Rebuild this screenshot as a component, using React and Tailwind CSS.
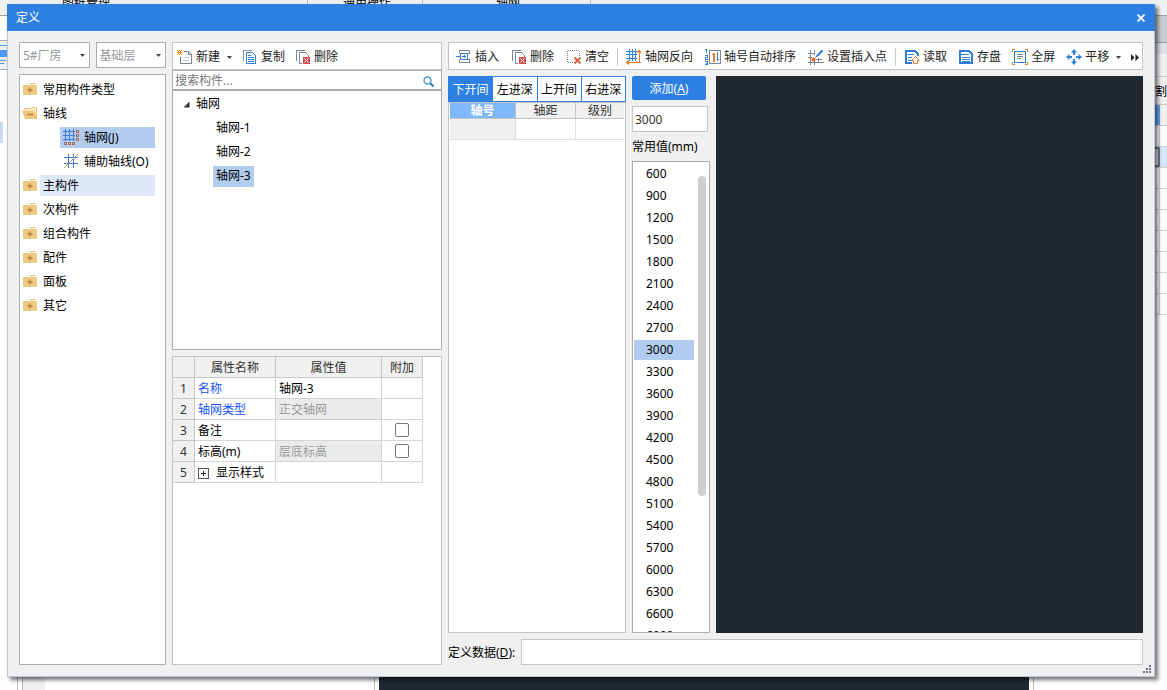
import React, { useState } from "react";

const CATEGORIES = [
  { label: "常用构件类型" },
  {
    label: "轴线",
    open: true,
    children: [
      { label: "轴网(J)", icon: GridNodesIcon, selected: true },
      { label: "辅助轴线(O)", icon: GridAuxIcon },
    ],
  },
  { label: "主构件", hover: true },
  { label: "次构件" },
  { label: "组合构件" },
  { label: "配件" },
  { label: "面板" },
  { label: "其它" },
];

const PROPERTIES = [
  { name: "名称", value: "轴网-3", link: true },
  { name: "轴网类型", value: "正交轴网", link: true, readOnly: true },
  { name: "备注", value: "", extra: true },
  { name: "标高(m)", value: "层底标高", readOnly: true, extra: true },
  { name: "显示样式", value: "", group: true },
];

const SPACINGS = [
  600, 900, 1200, 1500, 1800, 2100, 2400, 2700, 3000, 3300, 3600, 3900, 4200,
  4500, 4800, 5100, 5400, 5700, 6000, 6300, 6600, 6900,
];

function Svg({ children, size = 16 }) {
  return (
    <svg
      width={size}
      height={size}
      viewBox={`0 0 ${size} ${size}`}
      fill="none"
      shapeRendering="crispEdges"
      className="shrink-0"
      aria-hidden="true"
    >
      {children}
    </svg>
  );
}

function FolderIcon({ open }) {
  if (open) {
    return (
      <svg width="16" height="14" viewBox="0 0 16 14" className="shrink-0" aria-hidden="true">
        <path d="M2.500 4V2.500H9L10 1.500h4.500V12" stroke="#ecc06b" fill="#fdf0d0" />
        <path d="M0 4.500h12.500L15 13H3z" fill="#efc67a" />
        <path d="M5 8.500h6" stroke="#b8863a" strokeWidth="1.500" />
      </svg>
    );
  }
  return (
    <svg width="16" height="14" viewBox="0 0 16 14" className="shrink-0" aria-hidden="true">
      <path d="M7.500 2.200 8.500 1H13l1 1.200z" fill="#efc377" />
      <rect x="1" y="3" width="14" height="10" rx="1" fill="#efc97f" />
      <path d="M8 5.500v5M5.500 8h5" stroke="#c08f42" strokeWidth="1.800" />
    </svg>
  );
}

function GridNodesIcon() {
  return (
    <Svg>
      <path d="M0 2.500h12M0 6.500h12M0 10.500h12M2.500 0v12M6.500 0v12M10.500 0v12" stroke="#3a7fd5" />
      <path
        d="M13.500 1.500h2v2h-2zM13.500 5.500h2v2h-2zM13.500 9.500h2v2h-2zM1.500 13.500h2v2h-2zM5.500 13.500h2v2h-2zM9.500 13.500h2v2h-2z"
        stroke="#a8705c"
      />
    </Svg>
  );
}

function GridAuxIcon() {
  return (
    <Svg>
      <path d="M1 4.500h14M1 10.500h14M5.500 1v14M10.500 1v14" stroke="#3a7fd5" />
      <path d="M1 15 15 1" stroke="#c08a66" shapeRendering="auto" />
    </Svg>
  );
}

function NewIcon() {
  return (
    <Svg>
      <path d="M7 2.500h4.500l3 3v9h-11V8" stroke="#7b8691" />
      <path d="M11.500 3v2.500h3" stroke="#7b8691" />
      <path d="M6 8.500h6M6 11.500h6" stroke="#c4c9ce" />
      <path
        d="M0 1h1v1H0zM2 1h1v1H2zM4 1h1v1H4zM1 2h1v1H1zM3 2h1v1H3zM0 3h5v1H0zM1 4h1v1H1zM3 4h1v1H3zM0 5h1v1H0zM2 5h1v1H2zM4 5h1v1H4z"
        fill="#f08a0a"
      />
    </Svg>
  );
}

function CopyIcon() {
  return (
    <Svg>
      <path d="M1.500 12V1.500H10" stroke="#8a949e" />
      <path d="M4.500 3.500h6l3 3v8h-9z" stroke="#2f7fd6" />
      <path d="M6 6.500h3M6 8.500h6M6 10.500h6M6 12.500h6" stroke="#2f7fd6" />
    </Svg>
  );
}

function DeleteIcon() {
  return (
    <Svg>
      <path d="M1.500 12V1.500H10" stroke="#7b8691" />
      <path d="M7 14.500H4.500v-11h6l3 3V8" stroke="#7b8691" />
      <rect x="8" y="8" width="7" height="7" fill="#d9484c" />
      <path d="m9.500 9.500 4 4m0-4-4 4" stroke="#fff" shapeRendering="auto" />
    </Svg>
  );
}

function InsertIcon() {
  return (
    <Svg>
      <path d="M3.500 4V1.500h10v3H11M3.500 11v2.500h10v-3H11" stroke="#7b8691" />
      <path d="M4.500 5.500v4M0 7.500h4M4 4.500h7.500v6H4zM6 7.500h4M8 6v3" stroke="#2f7fd6" />
    </Svg>
  );
}

function ClearIcon() {
  return (
    <Svg>
      <path d="M7 13.500H1.500v-12h12V7" stroke="#7b8691" strokeDasharray="1 1" />
      <path d="m8.500 8.500 6 6m0-6-6 6" stroke="#d9603f" strokeWidth="1.800" shapeRendering="auto" />
    </Svg>
  );
}

function FlipGridIcon() {
  return (
    <Svg>
      <path d="M0 2.500h11M0 5.500h11M0 9.500h11M3.500 0v12M6.500 0v12M9.500 0v12" stroke="#2f7fd6" />
      <path d="M13.500 1v13M1 13.500h14M11 3.500l2-2 2 2M3 11.500l-2 2 2 2" stroke="#ee7a2b" />
    </Svg>
  );
}

function AutoSortIcon() {
  return (
    <Svg>
      <path d="M0 .500h1.500V4M0 6.500h2.500v2H.500v2H3M0 12.500h2.500v3H0M1 14h1" stroke="#2f7fd6" />
      <path d="M4.500 1.500h11v13h-11z" stroke="#7b8691" />
      <path d="M8.500 13V4M7 5.500h1" stroke="#ee7a2b" />
      <path d="M9 4v9" stroke="#ee7a2b" />
      <path d="M12.500 3v9M13 10.500h1" stroke="#2f7fd6" />
    </Svg>
  );
}

function InsertPointIcon() {
  return (
    <Svg>
      <path d="M0 4.500h6M0 8.500h4M0 13.500h16M8 10.500h6M2.500 1v15M6.500 1v5M6.500 12v4M10.500 9v4" stroke="#7b8691" />
      <g shapeRendering="auto">
        <path d="M7 9 9 5.500 14 .500l1.500 1.500-5 5z" fill="#2f7fd6" />
        <circle cx="5.500" cy="10.500" r="2" fill="#ee6a1b" />
      </g>
    </Svg>
  );
}

function ReadIcon() {
  return (
    <Svg>
      <path d="M8 14H2V2h9l3 3v2" stroke="#2f7fd6" strokeWidth="2" />
      <path d="M4 5.500h6M4 8.500h4M4 11.500h3" stroke="#2f7fd6" />
      <path d="M9.500 14.500v-3h-2l4-4 4 4h-2v3z" fill="#fff" stroke="#ee7a2b" shapeRendering="auto" />
    </Svg>
  );
}

function SaveIcon() {
  return (
    <Svg>
      <path d="M2 2h9l3 3v9H2z" stroke="#2f7fd6" strokeWidth="2" />
      <path d="M3 5.500h8M4 8.500h8M4 10.500h8M4 12.500h8" stroke="#2f7fd6" />
    </Svg>
  );
}

function FullscreenIcon() {
  return (
    <Svg>
      <path d="M3 .500H.500V3M13 .500h2.500V3M.500 13v2.500H3M15.500 13v2.500H13" stroke="#ee7a2b" />
      <path d="M2.500 2.500h11v11h-11z" stroke="#2f7fd6" />
      <path d="M5 5.500h6M5 7.500h6M5 9.500h4" stroke="#7b8691" />
    </Svg>
  );
}

function PanIcon() {
  return (
    <Svg>
      <path d="m8 0 3 3.500H9V6H7V3.500H5zM8 16l3-3.500H9V10H7v2.500H5zM0 8l3.500-3v2H6v2H3.500v2zM16 8l-3.500-3v2H10v2h2.500v2z" fill="#2f7fd6" shapeRendering="auto" />
    </Svg>
  );
}

function Caret() {
  return (
    <svg width="5" height="3" viewBox="0 0 5 3" className="shrink-0" aria-hidden="true">
      <path d="M0 0h5L2.500 3z" fill="#444" />
    </svg>
  );
}

function ToolButton({ icon: Icon, children, caret }) {
  return (
    <button type="button" className="flex shrink-0 items-center gap-[3px] text-[#222]">
      <Icon />
      <span>{children}</span>
      {caret && (
        <span className="pl-1">
          <Caret />
        </span>
      )}
    </button>
  );
}

function Separator() {
  return <span className="mx-2 h-[18px] w-px shrink-0 bg-[#c8c8cc]" />;
}

function Picker({ label, value }) {
  return (
    <div className="relative min-w-0 flex-1">
      <select
        aria-label={label}
        className="h-[26px] w-full appearance-none border border-[#adadad] bg-white pt-[2px] pl-[3px] text-[#999] outline-none"
      >
        <option>{value}</option>
      </select>
      <span className="pointer-events-none absolute inset-y-0 right-[5px] flex items-center">
        <Caret />
      </span>
    </div>
  );
}

function CategoryTree() {
  return (
    <ul className="min-h-0 flex-1 overflow-hidden border border-[#adadad] bg-white pt-[2px] pr-[10px] pl-[2px]">
      {CATEGORIES.map((cat) => (
        <li key={cat.label}>
          <button type="button" className="flex h-6 w-full items-center gap-[2px] text-left">
            <FolderIcon open={cat.open} />
            <span className={`h-[21px] flex-1 pl-[3px] leading-[21px] ${cat.hover ? "bg-[#dde8f9]" : ""}`}>
              {cat.label}
            </span>
          </button>
          {cat.children && (
            <ul className="pl-[38px]">
              {cat.children.map((child) => (
                <li key={child.label} className="flex h-6 items-center">
                  <button
                    type="button"
                    className={`flex h-[21px] w-full items-center gap-[5px] pl-[3px] text-left leading-[21px] whitespace-nowrap ${
                      child.selected ? "bg-[#b1ccee]" : ""
                    }`}
                  >
                    <child.icon />
                    {child.label}
                  </button>
                </li>
              ))}
            </ul>
          )}
        </li>
      ))}
    </ul>
  );
}

function ComponentList() {
  const [selected, setSelected] = useState("轴网-3");
  return (
    <section className="flex min-h-0 flex-[309] flex-col">
      <div className="flex h-7 items-center gap-[10px] border border-[#c3c3ca] bg-white pt-[2px] pl-1">
        <ToolButton icon={NewIcon} caret>新建</ToolButton>
        <ToolButton icon={CopyIcon}>复制</ToolButton>
        <ToolButton icon={DeleteIcon}>删除</ToolButton>
      </div>
      <label className="flex h-5 items-center border border-[#adadad] bg-white pt-[2px] pr-[7px] pl-[2px]">
        <input
          aria-label="搜索构件"
          placeholder="搜索构件..."
          className="min-w-0 flex-1 outline-none placeholder:text-[#777]"
        />
        <svg width="11" height="11" viewBox="0 0 11 11" fill="none" aria-hidden="true">
          <circle cx="4.500" cy="4.500" r="3.500" stroke="#4a9ed4" strokeWidth="1.400" />
          <path d="m7 7 3.500 3.500" stroke="#2a7fbc" strokeWidth="2" />
        </svg>
      </label>
      <div className="flex-1 overflow-hidden border border-[#adadad] bg-white pt-px">
        <div className="flex h-6 items-center gap-[6px] pl-[10px]">
          <svg width="7" height="7" viewBox="0 0 7 7" aria-hidden="true">
            <path d="M6.500.500v6h-6z" fill="#333" />
          </svg>
          轴网
        </div>
        <ul className="pl-10">
          {["轴网-1", "轴网-2", "轴网-3"].map((name) => (
            <li key={name} className="flex h-6 items-center">
              <button
                type="button"
                onClick={() => setSelected(name)}
                className={`h-[21px] px-[3px] ${name === selected ? "bg-[#b1ccee]" : ""}`}
              >
                {name}
              </button>
            </li>
          ))}
        </ul>
      </div>
    </section>
  );
}

function PropertyTable() {
  return (
    <section className="min-h-0 flex-[308] overflow-hidden border border-[#c3c3c7] bg-white">
      <table className="table-fixed border-separate border-spacing-0 [&_td]:border-r [&_td]:border-b [&_td]:border-[#d4d4d4] [&_th]:border-r [&_th]:border-b [&_th]:border-[#c6c6c6] [&_th]:bg-[#f0f0f0] [&_th]:pt-[2px] [&_th]:font-normal [&_th]:text-[#333]">
        <colgroup>
          <col className="w-[22px]" />
          <col className="w-[81px]" />
          <col className="w-[106px]" />
          <col className="w-[41px]" />
        </colgroup>
        <thead>
          <tr className="h-[21px]">
            <th />
            <th>属性名称</th>
            <th>属性值</th>
            <th>附加</th>
          </tr>
        </thead>
        <tbody>
          {PROPERTIES.map((p, i) => (
            <tr key={p.name} className="h-[21px]">
              <th scope="row">{i + 1}</th>
              <td className={`pt-[2px] pl-[3px] ${p.link ? "text-[#1554ff]" : ""}`}>
                <div className="flex items-center gap-[7px]">
                  {p.group && (
                    <svg width="11" height="11" viewBox="0 0 11 11" fill="none" shapeRendering="crispEdges" aria-hidden="true">
                      <rect x=".500" y=".500" width="10" height="10" rx="1" stroke="#555" />
                      <path d="M3 5.500h5M5.500 3v5" stroke="#222" />
                    </svg>
                  )}
                  {p.name}
                </div>
              </td>
              <td className={`pt-[2px] pl-[3px] ${p.readOnly ? "bg-[#ebebeb] text-[#999]" : ""}`}>{p.value}</td>
              <td>
                {p.extra && (
                  <input
                    type="checkbox"
                    aria-label={`${p.name} 附加`}
                    className="mx-auto block size-[14px] appearance-none rounded-[2px] border border-[#777] bg-white"
                  />
                )}
              </td>
            </tr>
          ))}
        </tbody>
      </table>
    </section>
  );
}

function AxisPanel() {
  const [tab, setTab] = useState("下开间");
  return (
    <section className="flex w-[178px] shrink-0 flex-col">
      <div className="flex h-[26px] divide-x divide-[#2d7fe2] border border-[#2d7fe2] bg-white" role="tablist">
        {["下开间", "左进深", "上开间", "右进深"].map((name) => (
          <button
            key={name}
            type="button"
            role="tab"
            aria-selected={name === tab}
            onClick={() => setTab(name)}
            className={`flex-1 pt-[2px] whitespace-nowrap ${name === tab ? "bg-[#2d7fe2] text-white" : ""}`}
          >
            {name}
          </button>
        ))}
      </div>
      <div className="flex-1 border border-[#c3c3c7] bg-white px-px">
        <table className="w-full table-fixed border-separate border-spacing-0">
          <colgroup>
            <col className="w-[66px]" />
            <col className="w-[60px]" />
            <col />
          </colgroup>
          <thead>
            <tr className="h-4 leading-[15px] [&>th]:border-b [&>th]:border-[#c3c3c3]">
              <th className="border-r bg-[#80b9fb] font-bold text-white">轴号</th>
              <th className="border-r bg-[#f0f0f0] font-normal text-[#333]">轴距</th>
              <th className="bg-[#f0f0f0] font-normal text-[#333]">级别</th>
            </tr>
          </thead>
          <tbody>
            <tr className="h-[21px] [&>td]:border-b [&>td]:border-[#e0e0e0]">
              <td className="border-r bg-[#f0f0f0]" />
              <td className="border-r" />
              <td />
            </tr>
          </tbody>
        </table>
      </div>
    </section>
  );
}

function SpacingPanel() {
  const [value, setValue] = useState("3000");
  return (
    <section className="flex min-h-0 w-[78px] shrink-0 flex-col">
      <button type="button" className="mr-1 h-6 rounded-[2px] bg-[#2d7fe2] pt-[2px] text-white">
        添加(<u>A</u>)
      </button>
      <input
        aria-label="轴距"
        value={value}
        onChange={(e) => setValue(e.target.value)}
        className="mt-[6px] mr-[2px] h-[26px] min-w-0 border border-[#c3c6cc] bg-white px-[2px] text-[#333] outline-none"
      />
      <h2 className="py-[5px] leading-[19px] whitespace-nowrap">常用值(mm)</h2>
      <div className="relative min-h-0 flex-1 overflow-hidden border border-[#adadad] bg-white">
        <ul className="pt-px pr-[15px] pl-px">
          {SPACINGS.map((n) => (
            <li key={n} className="flex h-[22px] items-center">
              <button
                type="button"
                onClick={() => setValue(String(n))}
                className={`h-5 w-full pl-3 text-left ${String(n) === value ? "bg-[#b1ccee]" : ""}`}
              >
                {n}
              </button>
            </li>
          ))}
        </ul>
        <span className="absolute top-[14px] right-[3px] h-[68%] w-2 rounded-full bg-[#cdcdcd]" />
      </div>
    </section>
  );
}

function AxisToolbar() {
  return (
    <div className="flex h-7 items-center overflow-hidden border border-[#c3c3ca] bg-white pt-[2px] pl-[7px]">
      <div className="flex gap-3">
        <ToolButton icon={InsertIcon}>插入</ToolButton>
        <ToolButton icon={DeleteIcon}>删除</ToolButton>
        <ToolButton icon={ClearIcon}>清空</ToolButton>
      </div>
      <Separator />
      <div className="flex gap-3">
        <ToolButton icon={FlipGridIcon}>轴网反向</ToolButton>
        <ToolButton icon={AutoSortIcon}>轴号自动排序</ToolButton>
        <ToolButton icon={InsertPointIcon}>设置插入点</ToolButton>
      </div>
      <Separator />
      <div className="flex gap-[11px]">
        <ToolButton icon={ReadIcon}>读取</ToolButton>
        <ToolButton icon={SaveIcon}>存盘</ToolButton>
        <ToolButton icon={FullscreenIcon}>全屏</ToolButton>
        <ToolButton icon={PanIcon} caret>平移</ToolButton>
      </div>
      <button type="button" aria-label="更多" className="ml-auto pr-[3px]">
        <svg width="8" height="7" viewBox="0 0 8 7" aria-hidden="true">
          <path d="M0 0l3.500 3.500L0 7zM4.500 0 8 3.500 4.500 7z" fill="#222" />
        </svg>
      </button>
    </div>
  );
}

function DefineDialog() {
  return (
    <div
      role="dialog"
      aria-label="定义"
      className="absolute top-1 right-3 bottom-[13px] left-[7px] flex flex-col border-r border-b border-l border-[#bcc6d8] bg-[#f0f0f0] shadow-[3px_3px_4px_rgba(0,0,0,0.55)]"
    >
      <header className="-mx-px flex h-[27px] shrink-0 items-center justify-between bg-[#2d7fe2] pr-[10px] pl-[9px] text-white">
        <h1>定义</h1>
        <button type="button" aria-label="关闭">
          <svg width="8" height="8" viewBox="0 0 8 8" aria-hidden="true">
            <path d="m.500.500 7 7m0-7-7 7" stroke="#fff" strokeWidth="1.800" />
          </svg>
        </button>
      </header>
      <main className="flex min-h-0 flex-1 gap-[6px] p-[11px]">
        <div className="flex w-[147px] shrink-0 flex-col gap-[6px]">
          <div className="flex gap-[6px]">
            <Picker label="工程" value="5#厂房" />
            <Picker label="楼层" value="基础层" />
          </div>
          <CategoryTree />
        </div>
        <div className="flex w-[270px] shrink-0 flex-col gap-[6px]">
          <ComponentList />
          <PropertyTable />
        </div>
        <div className="flex min-w-0 flex-1 flex-col gap-[6px]">
          <AxisToolbar />
          <div className="flex min-h-0 flex-1 gap-[6px]">
            <AxisPanel />
            <SpacingPanel />
            <div className="flex-1 bg-[#212830]" />
          </div>
          <label className="flex items-center gap-[6px]">
            <span className="shrink-0 pt-[2px]">
              定义数据(<u>D</u>):
            </span>
            <input className="h-[26px] min-w-0 flex-1 border border-[#c3c6cc] bg-white px-1 outline-none" />
          </label>
        </div>
      </main>
      <svg width="8" height="8" viewBox="0 0 8 8" className="absolute right-[3px] bottom-[3px]" aria-hidden="true">
        <path d="M6 0h2v2H6zM3 3h2v2H3zM6 3h2v2H6zM0 6h2v2H0zM3 6h2v2H3zM6 6h2v2H6z" fill="#6f737c" />
      </svg>
    </div>
  );
}

// The main window; only its edges show around the dialog.
function Workspace() {
  return (
    <div className="flex h-full flex-col">
      <div className="flex h-4 shrink-0 border-b border-[#9a9ea2] bg-[#edf2f1] leading-[6px]">
        <span className="w-[308px] border-r border-[#bbb] pl-[62px]">图纸管理</span>
        <span className="w-[115px] border-r border-[#bbb] pl-[35px]">通用操作</span>
        <span className="w-[168px] border-r border-[#bbb] pl-[73px]">轴网</span>
      </div>
      <div className="flex min-h-0 flex-1">
        <div className="w-[7px] shrink-0">
          <div className="mt-6 h-[30px] border-y border-[#aaa] bg-[#eef0f2] py-1">
            <svg width="7" height="20" viewBox="0 0 7 20" aria-hidden="true">
              <path d="M0 0h7v1H0zM0 5h7v7H0zM0 15h6v1H0zM0 18h4v1H0z" fill="#4d9bf0" />
            </svg>
          </div>
          <div className="mt-[52px] h-[21px] w-[3px] bg-[#c9dbf3]" />
        </div>
        <div className="flex min-w-0 flex-1 items-end">
          <div className="ml-[10px] h-4 w-[6px] border-x border-[#bbb]" />
          <div className="h-4 w-[22px] bg-[#f0f0f0]" />
          <div className="mr-1 h-4 w-[330px] border-r border-[#bbb]" />
          <div className="h-4 flex-1 bg-[#212830]" />
          <div className="ml-1 h-4 w-[122px] border-l border-[#bbb]" />
        </div>
        <div className="w-3 shrink-0 overflow-hidden">
          <div className="h-[27px] border-b border-[#999] bg-[#c9cdd1]" />
          <div className="h-[11px] bg-[#dfe1e5]" />
          <div className="h-[23px] border-b border-[#ccc] bg-[#f0f0f0]" />
          <div className="flex h-7 items-center border-b border-[#ccc] bg-[#f0f0f0] pt-[3px]">割</div>
          <div className="h-[21px] border-b border-[#ccc] bg-[#f0f0f0]">
            <div className="h-5 w-[5px] bg-[#66a9f0]" />
          </div>
          {[0, 1, 2, 3, 4, 5, 6, 7, 8].map((row) => (
            <div key={row} className={`h-[21px] border-b border-[#d4d4d4] ${row === 1 ? "bg-[#d6e8fc]" : ""}`}>
              <div className={row === 1 ? "h-5 w-[5px] border-2 border-l-0 border-[#777]" : "h-5 w-[5px] border-r border-[#d4d4d4]"} />
            </div>
          ))}
        </div>
      </div>
    </div>
  );
}

export default function App() {
  return (
    <div className="relative h-screen overflow-hidden bg-white font-['Noto_Sans','Noto_Sans_CJK_SC',sans-serif] text-[12px] leading-4 text-black">
      <Workspace />
      <DefineDialog />
    </div>
  );
}
